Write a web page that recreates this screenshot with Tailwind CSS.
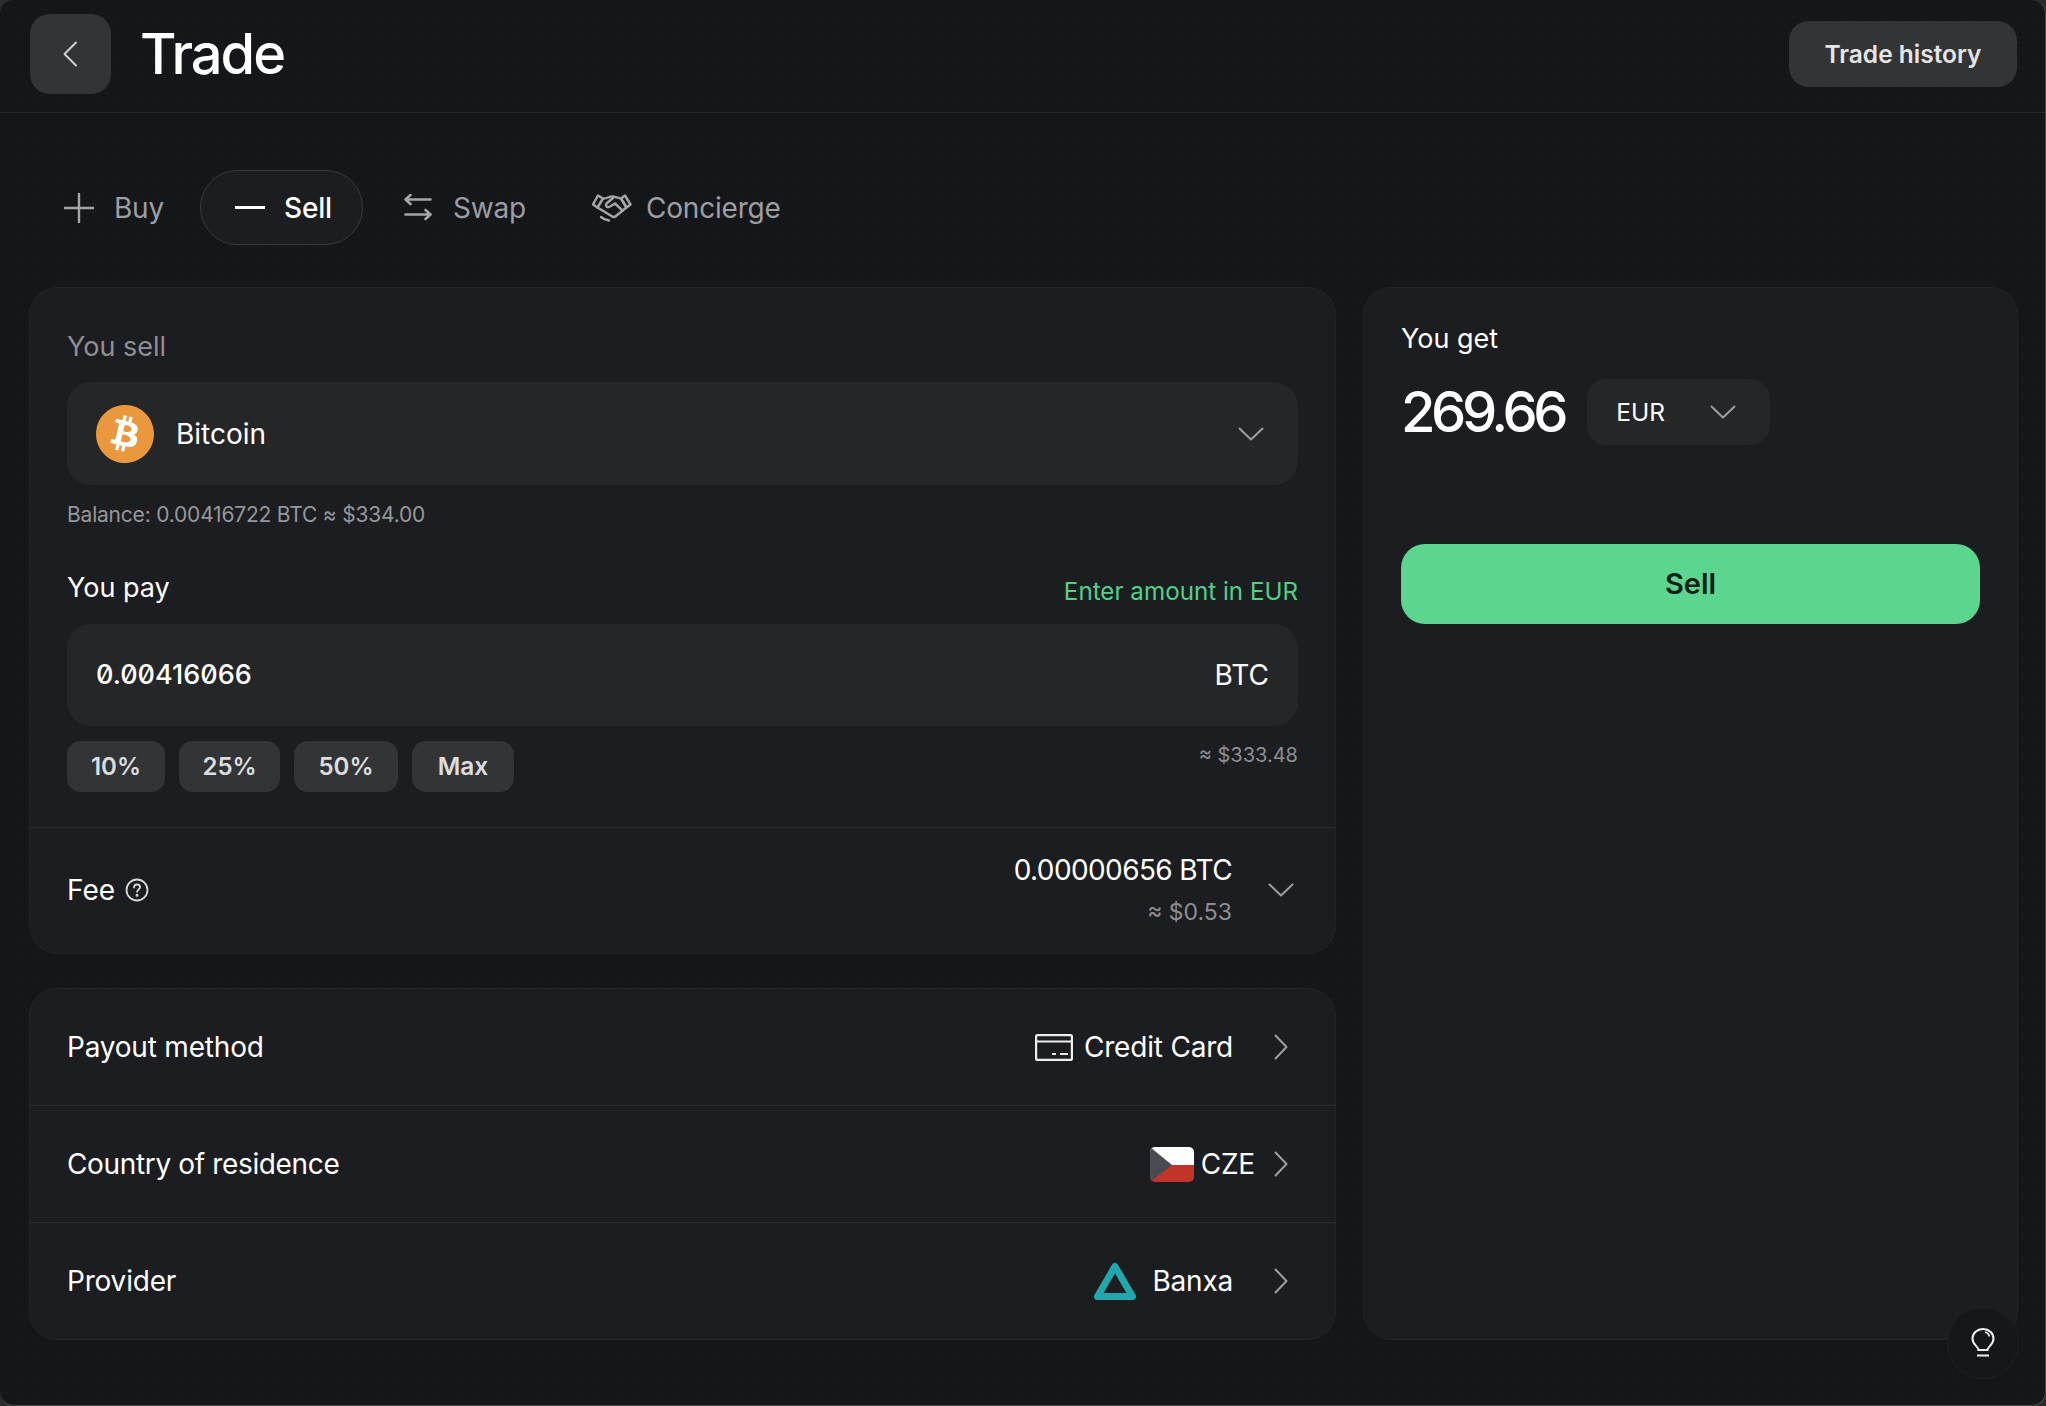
<!DOCTYPE html>
<html lang="en">
<head>
  <meta charset="UTF-8">
  <title>Trade</title>
  <script src="https://cdn.jsdelivr.net/npm/@tailwindcss/browser@4"></script>
</head>
<body class="bg-[#2a2b2d] font-['Inter',sans-serif] text-white">
  <div class="relative w-[2046px] h-[1406px] overflow-hidden rounded-[14px] border-r border-b border-[#4a4b4d] bg-[#15161a] bg-[radial-gradient(#18191d_1px,transparent_1px)] bg-[size:5px_5px]">
    <!-- Header -->
    <header class="flex h-[113px] items-center justify-between border-b border-[#26272a] pl-[30px] pr-[28px] pb-[4px]">
      <div class="flex items-center gap-[29px]">
        <button class="flex h-[80px] w-[81px] items-center justify-center rounded-[20px] bg-[#333436]">
          <svg class="mr-[2px] w-[16px] h-[26px]" viewBox="0 0 16 26" fill="none" stroke="#d0d1d3" stroke-width="2" stroke-linecap="round" stroke-linejoin="round"><path d="M14 1.500 2.500 13 14 24.500"/></svg>
        </button>
        <h1 class="text-[56px] leading-none font-medium tracking-[-2px]">Trade</h1>
      </div>
      <button class="h-[66px] w-[228px] rounded-[20px] bg-[#333436] text-[24.5px] font-semibold text-[#e4e5e6]">Trade history</button>
    </header>

    <!-- Tabs -->
    <nav class="mt-[57px] flex h-[75px] items-center pl-[64px] text-[28px] tracking-[-0.2px] text-[#9d9ea2]">
      <div class="flex items-center gap-[20px]">
        <svg class="w-[30px] h-[30px]" viewBox="0 0 30 30" fill="none" stroke="#a5a6a9" stroke-width="2.400"><path d="M15 0v30M0 15h30"/></svg>
        <span>Buy</span>
      </div>
      <div class="ml-[36px] flex h-[75px] w-[163px] items-center gap-[19px] rounded-[37px] border border-[#38393b] bg-[#1c1d20] pl-[34px] text-white font-medium">
        <span class="h-[3px] w-[30px] bg-white"></span>
        <span>Sell</span>
      </div>
      <div class="ml-[41px] flex items-center gap-[21px]">
        <svg class="w-[28px] h-[27px]" viewBox="0 0 28 27" fill="none" stroke="#a5a6a9" stroke-width="2.600" stroke-linecap="round" stroke-linejoin="round"><path d="M6.500 1 1.500 5.500l5 4.500M1.500 5.500h25M1.500 20.500h25M21.500 16l5 4.500-5 4.500"/></svg>
        <span>Swap</span>
      </div>
      <div class="ml-[66px] flex items-center gap-[14px]">
        <svg class="w-[40px] h-[28px]" viewBox="0 0 40 28" fill="none" stroke="#a5a6a9" stroke-width="2.400" stroke-linecap="round" stroke-linejoin="round">
          <path d="M6 1.500 1 10.500l4.500 3L11 4.500z"/>
          <path d="M33 1.500l5.500 9-4 3-5.500-9z"/>
          <path d="M11 4.500c3.500.5 6-2 9-2 3 0 6 1.500 9 2l5.500 9L24 22c-1.500 1.200-3 1.200-4.500 0L5.500 13.500"/>
          <path d="M21 4 14.500 9.500c-1.500 2 .5 4.500 3 3.200L23 9.500l7.500 7"/>
          <path d="M9 23c2 1.800 4.500 3 8 3.500"/>
        </svg>
        <span>Concierge</span>
      </div>
    </nav>

    <!-- Main -->
    <main class="mt-[42px] flex gap-[27px] pl-[29px]">
      <div class="flex w-[1307px] flex-col gap-[34px]">
        <section class="h-[667px] rounded-[28px] border border-[#232427] bg-[#1c1d20]">
          <div class="px-[37px] pt-[39px]">
            <p class="text-[27px] leading-[40px] text-[#8e8f93]">You sell</p>
            <div class="mt-[15px] flex h-[103px] items-center rounded-[24px] bg-[#252628] pl-[29px] pr-[34px]">
              <svg class="w-[58px] h-[58px] shrink-0" viewBox="0 0 24 24">
                <circle cx="12" cy="12" r="11.500" fill="#fff"/>
                <path fill="#ea983e" d="M23.638 14.904c-1.602 6.43-8.113 10.34-14.542 8.736C2.67 22.05-1.244 15.525.362 9.105 1.962 2.67 8.475-1.243 14.9.358c6.43 1.605 10.342 8.115 8.738 14.548v-.002zm-6.35-4.613c.24-1.59-.974-2.45-2.64-3.03l.54-2.153-1.315-.33-.525 2.107c-.345-.087-.705-.167-1.064-.25l.526-2.127-1.32-.33-.54 2.165c-.285-.067-.565-.132-.84-.2l-1.815-.45-.35 1.407s.975.225.955.236c.535.136.63.486.615.766l-1.477 5.92c-.075.166-.24.406-.614.314.015.02-.96-.24-.96-.24l-.66 1.51 1.71.426.93.242-.54 2.19 1.32.327.54-2.17c.36.1.705.19 1.05.273l-.51 2.154 1.32.33.545-2.19c2.24.427 3.93.257 4.64-1.774.57-1.637-.03-2.58-1.217-3.196.854-.193 1.5-.76 1.68-1.93h.01zm-3.01 4.22c-.404 1.64-3.157.75-4.05.53l.72-2.9c.896.23 3.757.67 3.33 2.37zm.41-4.24c-.37 1.49-2.662.735-3.405.55l.654-2.64c.744.18 3.137.524 2.75 2.084v.006z"/>
              </svg>
              <span class="ml-[22px] text-[28px]">Bitcoin</span>
              <svg class="ml-auto w-[26px] h-[14px]" viewBox="0 0 26 14" fill="none" stroke="#9d9ea2" stroke-width="2" stroke-linecap="round" stroke-linejoin="round"><path d="M1.500 1.500 13 12.500 24.500 1.500"/></svg>
            </div>
            <p class="mt-[17px] text-[21px] leading-[26px] tracking-[-0.2px] text-[#96979b]">Balance: 0.00416722 BTC ≈ $334.00</p>
            <div class="mt-[40px] flex items-end justify-between">
              <p class="text-[27px] leading-[40px] text-white">You pay</p>
              <p class="relative top-[1px] text-[24.2px] leading-[34px] text-[#52d08a]">Enter amount in EUR</p>
            </div>
            <div class="mt-[16px] flex h-[102px] items-center justify-between rounded-[24px] bg-[#252628] pl-[29px] pr-[29px]">
              <span class="text-[27px] font-medium slashed-zero">0.00416066</span>
              <span class="text-[28px]">BTC</span>
            </div>
            <div class="mt-[15px] flex items-start justify-between">
              <div class="flex gap-[14px]">
                <button class="h-[51px] w-[98px] rounded-[14px] bg-[#333436] text-[24px] font-semibold text-[#dcdde0]">10%</button>
                <button class="h-[51px] w-[101px] rounded-[14px] bg-[#333436] text-[24px] font-semibold text-[#dcdde0]">25%</button>
                <button class="h-[51px] w-[104px] rounded-[14px] bg-[#333436] text-[24px] font-semibold text-[#dcdde0]">50%</button>
                <button class="h-[51px] w-[102px] rounded-[14px] bg-[#333436] text-[24.5px] font-semibold text-[#dcdde0]">Max</button>
              </div>
              <span class="text-[20px] leading-[28px] text-[#8e8f93]">≈ $333.48</span>
            </div>
          </div>
          <div class="mt-[35px] flex h-[124px] items-center border-t border-[#2a2b2e] pl-[37px] pr-[41px]">
            <span class="text-[28px]">Fee</span>
            <svg class="ml-[10px] w-[24px] h-[24px]" viewBox="0 0 24 24" fill="none" stroke="#d8d9db" stroke-width="1.800" stroke-linecap="round"><circle cx="12" cy="12" r="10.500"/><path d="M9 9.500c0-1.800 1.400-3 3.100-3s3 1.200 3 2.800c0 2.300-3 2.300-3 4.500"/><circle cx="12" cy="17.300" r=".6" fill="#d8d9db"/></svg>
            <div class="ml-auto pt-[2px] text-right">
              <p class="text-[28px] leading-[42px] tracking-[-0.6px]">0.00000656 BTC</p>
              <p class="text-[23px] leading-[42px] text-[#8e8f93]">≈ $0.53</p>
            </div>
            <svg class="ml-[36px] w-[26px] h-[14px]" viewBox="0 0 26 14" fill="none" stroke="#9d9ea2" stroke-width="2" stroke-linecap="round" stroke-linejoin="round"><path d="M1.500 1.500 13 12.500 24.500 1.500"/></svg>
          </div>
        </section>

        <section class="h-[352px] rounded-[28px] border border-[#232427] bg-[#1c1d20] text-[28px] tracking-[-0.2px]">
          <div class="flex h-[117px] items-center border-b border-[#2a2b2e] pl-[37px] pr-[47px]">
            <span>Payout method</span>
            <svg class="ml-auto w-[38px] h-[27px]" viewBox="0 0 38 27" fill="none" stroke="#eeeeef" stroke-width="2.200"><rect x="1.100" y="1.100" width="35.800" height="24.800" rx="1.500"/><path d="M1 7.500h36M17 20h4M25 20h8"/></svg>
            <span class="ml-[11px]">Credit Card</span>
            <svg class="ml-[41px] w-[14px] h-[26px]" viewBox="0 0 14 26" fill="none" stroke="#9d9ea2" stroke-width="2" stroke-linecap="round" stroke-linejoin="round"><path d="M1.500 1.500 12.500 13 1.500 24.500"/></svg>
          </div>
          <div class="flex h-[117px] items-center border-b border-[#2a2b2e] pl-[37px] pr-[47px]">
            <span class="tracking-[-0.35px]">Country of residence</span>
            <svg class="ml-auto w-[44px] h-[35px]" viewBox="0 0 44 35"><clipPath id="flag"><rect width="44" height="35" rx="5"/></clipPath><g clip-path="url(#flag)"><rect width="44" height="18" fill="#fff"/><rect y="18" width="44" height="17" fill="#c0352a"/><path d="M0 0 22 18 0 35z" fill="#494b50"/></g></svg>
            <span class="ml-[7px]">CZE</span>
            <svg class="ml-[19px] w-[14px] h-[26px]" viewBox="0 0 14 26" fill="none" stroke="#9d9ea2" stroke-width="2" stroke-linecap="round" stroke-linejoin="round"><path d="M1.500 1.500 12.500 13 1.500 24.500"/></svg>
          </div>
          <div class="flex h-[116px] items-center pl-[37px] pr-[47px]">
            <span>Provider</span>
            <svg class="ml-auto w-[44px] h-[39px]" viewBox="0 0 44 39" fill="none" stroke="#20a8ad" stroke-width="7" stroke-linejoin="round"><path d="M22 4.500 39.500 34.500H4.500z"/></svg>
            <span class="ml-[15px]">Banxa</span>
            <svg class="ml-[41px] w-[14px] h-[26px]" viewBox="0 0 14 26" fill="none" stroke="#9d9ea2" stroke-width="2" stroke-linecap="round" stroke-linejoin="round"><path d="M1.500 1.500 12.500 13 1.500 24.500"/></svg>
          </div>
        </section>
      </div>

      <aside class="h-[1053px] w-[655px] rounded-[28px] border border-[#232427] bg-[#1c1d20] px-[37px] pt-[31px]">
        <p class="text-[27px] leading-[40px]">You get</p>
        <div class="mt-[20px] flex items-center gap-[23px]">
          <span class="text-[56px] leading-[66px] font-medium tracking-[-4.4px]">269.66</span>
          <div class="flex h-[66px] w-[183px] items-center rounded-[20px] bg-[#252628] pl-[29px] pr-[34px]">
            <span class="text-[24.5px]">EUR</span>
            <svg class="ml-auto w-[26px] h-[14px]" viewBox="0 0 26 14" fill="none" stroke="#9d9ea2" stroke-width="2" stroke-linecap="round" stroke-linejoin="round"><path d="M1.500 1.500 13 12.500 24.500 1.500"/></svg>
          </div>
        </div>
        <button class="mt-[99px] h-[80px] w-[579px] rounded-[24px] bg-[#5cd68f] text-[29px] font-semibold text-[#14201a]">Sell</button>
      </aside>
    </main>

    <!-- Floating tip button -->
    <button class="absolute left-[1947px] top-[1307px] flex h-[72px] w-[72px] items-center justify-center rounded-full border border-[#1f2023] bg-[#16171a]">
      <svg class="w-[24px] h-[30px]" viewBox="0 0 24 30" fill="none" stroke="#f0f0f1" stroke-width="2"><path d="M7.500 22c0-3.500-6-5-6-11.500a10.500 9.500 0 1 1 21 0C22.500 17 16.500 18.500 16.500 22z"/><path d="M6 27.500h12"/><path d="M14 4a6 6 0 0 1 4.500 4.500" stroke-width="1.600"/></svg>
    </button>
  </div>
</body>
</html>
